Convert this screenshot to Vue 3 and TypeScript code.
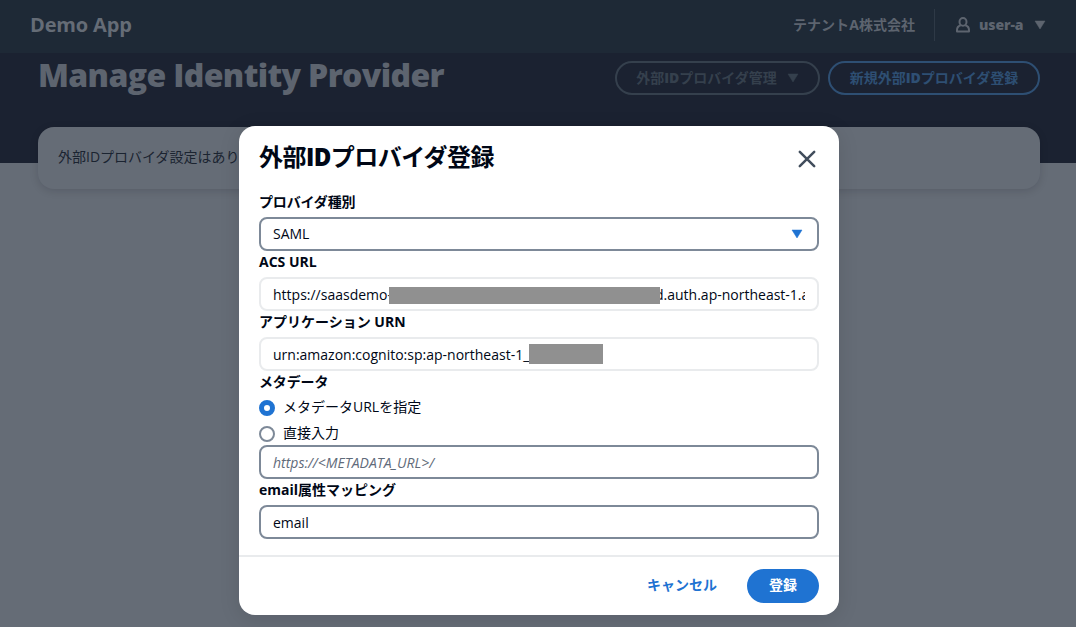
<script setup lang="ts">
import { ref } from 'vue'

type Source = 'url' | 'direct'
const sources: { id: Source; label: string }[] = [
  { id: 'url', label: 'メタデータURLを指定' },
  { id: 'direct', label: '直接入力' },
]
const source = ref<Source>('url')
const emailAttribute = ref('email')
const metadataUrl = ref('')
</script>

<template>
  <div class="page">
    <header class="topbar">
      <span class="brand">Demo App</span>
      <div class="account">
        <span class="tenant">テナントA株式会社</span>
        <div class="user">
          <svg class="user-icon" width="16" height="16" viewBox="0 0 16 16">
            <ellipse cx="8" cy="4.900" rx="3.500" ry="3.800" />
            <path d="M5.700 8.300C3.500 9 2 10.800 2 13v1.600h12V13c0-2.200-1.500-4-3.700-4.700" />
          </svg>
          <span class="user-name">user-a</span>
          <svg class="caret" width="12" height="10" viewBox="0 0 12 10"><path d="M1 1h10L6 9z" /></svg>
        </div>
      </div>
    </header>
    <section class="hero">
      <div class="hero-row">
        <h1>Manage Identity Provider</h1>
        <div class="actions">
          <button class="pill muted">
            <span>外部<b>ID</b>プロバイダ管理</span>
            <svg class="caret" width="12" height="10" viewBox="0 0 12 10"><path d="M1 1h10L6 9z" /></svg>
          </button>
          <button class="pill link"><span>新規外部<b>ID</b>プロバイダ登録</span></button>
        </div>
      </div>
      <div class="panel">外部IDプロバイダ設定はありません</div>
    </section>

    <div class="modal" role="dialog">
      <div class="modal-head">
        <h2>外部<b>ID</b>プロバイダ登録</h2>
        <svg class="close" width="18" height="18" viewBox="0 0 18 18"><path d="M1.800 1.800l14.400 14.400M16.200 1.800l-14.400 14.400" /></svg>
      </div>
      <div class="form">
        <div class="label jp">プロバイダ種別</div>
        <div class="field select">
          <span>SAML</span>
          <svg width="12" height="10" viewBox="0 0 12 10"><path d="M1 1h10L6 9z" /></svg>
        </div>
        <div class="label">ACS URL</div>
        <div class="field readonly">
          <div class="clip"><span class="lead">https://saasdemo-</span><span>d.auth.ap-northeast-1.a</span></div>
          <i class="mask mask-domain"></i>
        </div>
        <div class="label">アプリケーション URN</div>
        <div class="field readonly">
          <span class="urn">urn:amazon:cognito:sp:ap-northeast-1_</span>
          <i class="mask mask-pool"></i>
        </div>
        <div class="label jp">メタデータ</div>
        <div v-for="s in sources" :key="s.id" class="radio" @click="source = s.id">
          <i class="dot" :class="{ on: source === s.id }"></i>
          <span>{{ s.label }}</span>
        </div>
        <input v-model="metadataUrl" class="field" placeholder="https://&lt;METADATA_URL&gt;/" />
        <div class="label">email属性マッピング</div>
        <input v-model="emailAttribute" class="field" />
      </div>
      <footer class="modal-foot">
        <button class="cancel">キャンセル</button>
        <button class="submit">登録</button>
      </footer>
    </div>
  </div>
</template>

<style>
body { margin: 0; overflow: hidden; }
</style>

<style scoped>
* { box-sizing: border-box; }
.page {
  position: relative;
  width: 1076px;
  height: 627px;
  overflow: hidden;
  background: #656c76;
  font-family: "Open Sans", "Noto Sans CJK JP", sans-serif;
  font-size: 14px;
  line-height: 22px;
  color: #000716;
}
button, input { font: inherit; }
b { font-weight: 800; }
h1, h2 { margin: 0; }
.topbar {
  display: flex;
  align-items: center;
  justify-content: space-between;
  height: 53px;
  padding: 0 30px;
  background: #1e2936;
  color: #656c76;
}
.brand { font-size: 20px; font-weight: 700; line-height: 28px; letter-spacing: -0.15px; margin-top: -4px; }
.account { display: flex; align-items: center; height: 32px; margin-top: -4px; font-weight: 700; color: #5d646f; }
.tenant { padding-right: 19px; letter-spacing: 0.05px; }
.user { display: flex; align-items: center; height: 32px; padding-left: 20px; border-left: 1px solid #2e3946; }
.user-icon { fill: none; stroke: #5d646f; stroke-width: 2; stroke-linejoin: round; }
.user-name { margin-left: 8px; font-weight: 800; letter-spacing: -0.1px; }
.user .caret { margin-left: 10.500px; }
.caret { fill: currentColor; stroke: currentColor; stroke-width: 0.5; }
.hero { height: 110px; padding: 8px 36px 0 38px; background: #1b2231; }
.hero-row { display: flex; justify-content: space-between; height: 66px; }
h1 { font-size: 32px; font-weight: 800; line-height: 28px; letter-spacing: -0.64px; color: #5d646f; white-space: nowrap; }
.actions { display: flex; gap: 8px; }
.pill {
  display: flex;
  align-items: center;
  justify-content: center;
  height: 34px;
  padding: 0;
  border: 2px solid;
  border-radius: 17px;
  background: transparent;
  font-weight: 700;
  white-space: nowrap;
}
.pill.muted { width: 205px; color: #35404d; gap: 10px; }
.pill.link { width: 212px; color: #2e4f73; }
.panel {
  height: 62px;
  padding: 19px 20px;
  border-radius: 16px;
  background: #656c76;
  color: #1b2431;
  box-shadow: 0 2px 8px rgba(0, 7, 22, 0.14);
}
.modal {
  position: absolute;
  left: 239px;
  top: 126px;
  width: 600px;
  height: 489px;
  border-radius: 16px;
  background: #fff;
  box-shadow: 0 4px 20px 1px rgba(0, 7, 22, 0.1);
}
.modal-head { display: flex; justify-content: space-between; align-items: center; height: 65px; padding: 0 23px 0 20px; }
h2 { font-size: 24px; line-height: 30px; font-weight: 700; letter-spacing: -0.55px; margin-top: -4px; }
.close { fill: none; stroke: #414d5c; stroke-width: 2.500; stroke-linecap: round; }
.form { padding: 0 20px; height: 364px; }
.label { height: 22px; margin-bottom: 4px; font-weight: 700; white-space: nowrap; }
.label.jp { letter-spacing: -0.15px; }
.field {
  position: relative;
  display: flex;
  align-items: center;
  width: 100%;
  height: 34px;
  padding: 0 12px;
  border: 2px solid #7d8998;
  border-radius: 8px;
  background: #fff;
  color: #000716;
  outline: none;
}
.field::placeholder { color: #5f6b7a; font-style: italic; opacity: 1; }
.select { justify-content: space-between; padding-right: 14px; }
.select svg { fill: #1f73d2; stroke: #1f73d2; stroke-width: 0.5; }
.readonly { border-color: #e9ebed; padding-top: 2px; }
.clip { display: flex; overflow: hidden; white-space: nowrap; width: 532px; }
.lead { flex: 0 0 382px; }
.mask { position: absolute; background: #909090; }
.mask-domain { left: 128px; top: 8px; width: 271px; height: 17px; }
.mask-pool { left: 268px; top: 5px; width: 74px; height: 20px; }
.radio { display: flex; align-items: center; height: 22px; gap: 8px; }
.radio span { line-height: 20px; height: 22px; }
.radio + .radio { margin-top: 4px; }
.dot { width: 16px; height: 16px; border: 2px solid #7d8998; border-radius: 50%; background: #fff; }
.dot.on { border: 5px solid #1f73d2; }
.modal-foot {
  display: flex;
  justify-content: flex-end;
  align-items: flex-start;
  height: 60px;
  padding: 12px 20px 0;
  border-top: 2px solid #e9ebed;
}
.cancel, .submit { height: 34px; padding: 0 0 2px; border: 0; font-weight: 700; border-radius: 17px; }
.cancel { width: 110px; margin-right: 10px; background: transparent; color: #1f73d2; }
.submit { width: 72px; background: #1f73d2; color: #fff; }
</style>
